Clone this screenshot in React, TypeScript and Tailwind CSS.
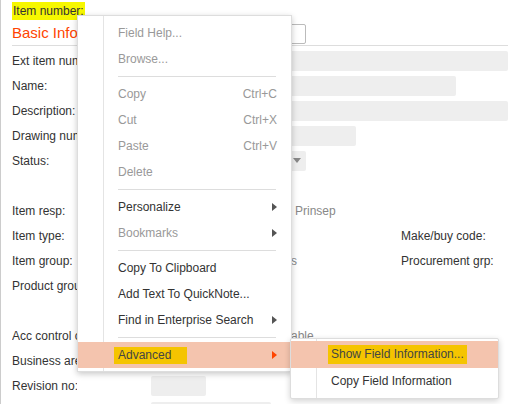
import React from 'react';

type Item = { label: string; shortcut?: string; disabled?: boolean; sub?: boolean } | 'sep';

const menuItems: Item[] = [
  { label: 'Field Help...', disabled: true },
  { label: 'Browse...', disabled: true },
  'sep',
  { label: 'Copy', shortcut: 'Ctrl+C', disabled: true },
  { label: 'Cut', shortcut: 'Ctrl+X', disabled: true },
  { label: 'Paste', shortcut: 'Ctrl+V', disabled: true },
  { label: 'Delete', disabled: true },
  'sep',
  { label: 'Personalize', sub: true },
  { label: 'Bookmarks', disabled: true, sub: true },
  'sep',
  { label: 'Copy To Clipboard' },
  { label: 'Add Text To QuickNote...' },
  { label: 'Find in Enterprise Search', sub: true },
  'sep',
];

const Arrow = ({ color = '#555' }: { color?: string }) => (
  <svg width="5" height="8" viewBox="0 0 5 8" className="shrink-0">
    <path d="M0 0 L5 4 L0 8 Z" fill={color} />
  </svg>
);

// labels are cut by the open menu, so clip them where it begins
const Row = ({ label, children }: { label: string; children?: React.ReactNode }) => (
  <div className="flex h-[25px] items-center">
    <div className="w-[139px] shrink-0">
      <div className="w-[65px] overflow-hidden whitespace-nowrap text-[#333]">{label}</div>
    </div>
    <div className="flex flex-1 items-center">{children}</div>
  </div>
);

const Box = ({ w }: { w?: string }) => (
  <div className={`h-[20px] rounded-[2px] bg-[#eeeeee] ${w ?? 'flex-1'}`} />
);

export default function App() {
  return (
    <div
      className="relative h-[404px] w-[508px] overflow-hidden border-l border-[#cccccc] bg-white text-[12px]"
      style={{ fontFamily: '"Liberation Sans", Arial, sans-serif' }}
    >
      {/* background form */}
      <div className="pl-[11px]">
        <div className="h-[22px] pt-[2px]">
          <span className="inline-block bg-[#f7f700] px-[1px] leading-[18px] text-[#333]">Item number:</span>
        </div>
        <div className="flex h-[24px] items-end border-b border-[#dddddd] pb-[1px]">
          <div className="w-[228px] shrink-0">
            <div className="w-[65px] overflow-hidden whitespace-nowrap pb-[2px] text-[15px] leading-[18px] text-[#ff4400]">
              Basic Information
            </div>
          </div>
          <div className="h-[20px] w-[66px] rounded-[2px] border border-[#bbbbbb] bg-white" />
        </div>
        <div className="pt-[2px]">
          <Row label="Ext item number:">
            <Box />
          </Row>
          <Row label="Name:">
            <Box w="w-[305px]" />
          </Row>
          <Row label="Description:">
            <Box />
          </Row>
          <Row label="Drawing number:">
            <Box w="w-[205px]" />
          </Row>
          <Row label="Status:">
            <div className="flex h-[20px] w-[155px] items-center justify-end rounded-[2px] bg-[#eeeeee] pr-[5px]">
              <svg width="8" height="5" viewBox="0 0 8 5">
                <path d="M0 0 L8 0 L4 5 Z" fill="#888" />
              </svg>
            </div>
          </Row>
          <Row label="" />
          <Row label="Item resp:">
            <span className="ml-[144px] whitespace-nowrap text-[#888]">Prinsep</span>
          </Row>
          <Row label="Item type:">
            <span className="ml-[250px] whitespace-nowrap text-[#333]">Make/buy code:</span>
          </Row>
          <Row label="Item group:">
            <span className="ml-[140px] w-[110px] whitespace-nowrap text-[#888]">s</span>
            <span className="whitespace-nowrap text-[#333]">Procurement grp:</span>
          </Row>
          <Row label="Product group:" />
          <Row label="" />
          <Row label="Acc control code:">
            <span className="ml-[140px] whitespace-nowrap text-[#888]">able</span>
          </Row>
          <Row label="Business area:" />
          <Row label="Revision no:">
            <Box w="w-[55px]" />
          </Row>
          <div className="flex pt-[4px]">
            <div className="w-[139px]" />
            <Box w="w-[120px]" />
          </div>
        </div>
      </div>

      {/* context menu */}
      <div className="absolute left-[76px] top-[15px] w-[215px] border border-[#dddddd] bg-white pb-[3px] pt-[4px] shadow-[0_2px_6px_rgba(0,0,0,0.22)]">
        <div className="pointer-events-none absolute bottom-0 left-[25px] top-0 border-l border-[#e4e4e4]" />
        {menuItems.map((it, i) =>
          it === 'sep' ? (
            <div key={i} className="flex h-[9px] items-center pl-[40px] pr-[15px]">
              <div className="h-px flex-1 bg-[#dddddd]" />
            </div>
          ) : (
            <div
              key={i}
              className={`flex h-[26px] items-center pl-[40px] pr-[14px] ${it.disabled ? 'text-[#999]' : 'text-[#333]'}`}
            >
              <span className="flex-1 whitespace-nowrap">{it.label}</span>
              {it.shortcut && <span className="whitespace-nowrap">{it.shortcut}</span>}
              {it.sub && <Arrow />}
            </div>
          )
        )}
        <div className="relative flex h-[26px] items-center bg-[#f4c4ae] pl-[36px] pr-[14px] text-[#444]">
          <span className="flex-1">
            <span className="inline-block bg-[#f5c400] pl-[4px] pr-[16px] leading-[17px]">Advanced</span>
          </span>
          <Arrow color="#ff4400" />
        </div>
      </div>

      {/* submenu */}
      <div className="absolute left-[289px] top-[338px] w-[209px] rounded-[2px] border border-[#dddddd] bg-white pb-[4px] pt-[2px] shadow-[0_2px_6px_rgba(0,0,0,0.18)]">
        <div className="pointer-events-none absolute bottom-0 left-[25px] top-0 border-l border-[#e4e4e4]" />
        <div className="relative flex h-[27px] items-center bg-[#f4c4ae] pl-[37px] text-[#444]">
          <span className="inline-block whitespace-nowrap bg-[#f5c400] px-[3px] leading-[19px]">
            Show Field Information...
          </span>
        </div>
        <div className="flex h-[26px] items-center pl-[40px] text-[#333]">Copy Field Information</div>
      </div>
    </div>
  );
}
